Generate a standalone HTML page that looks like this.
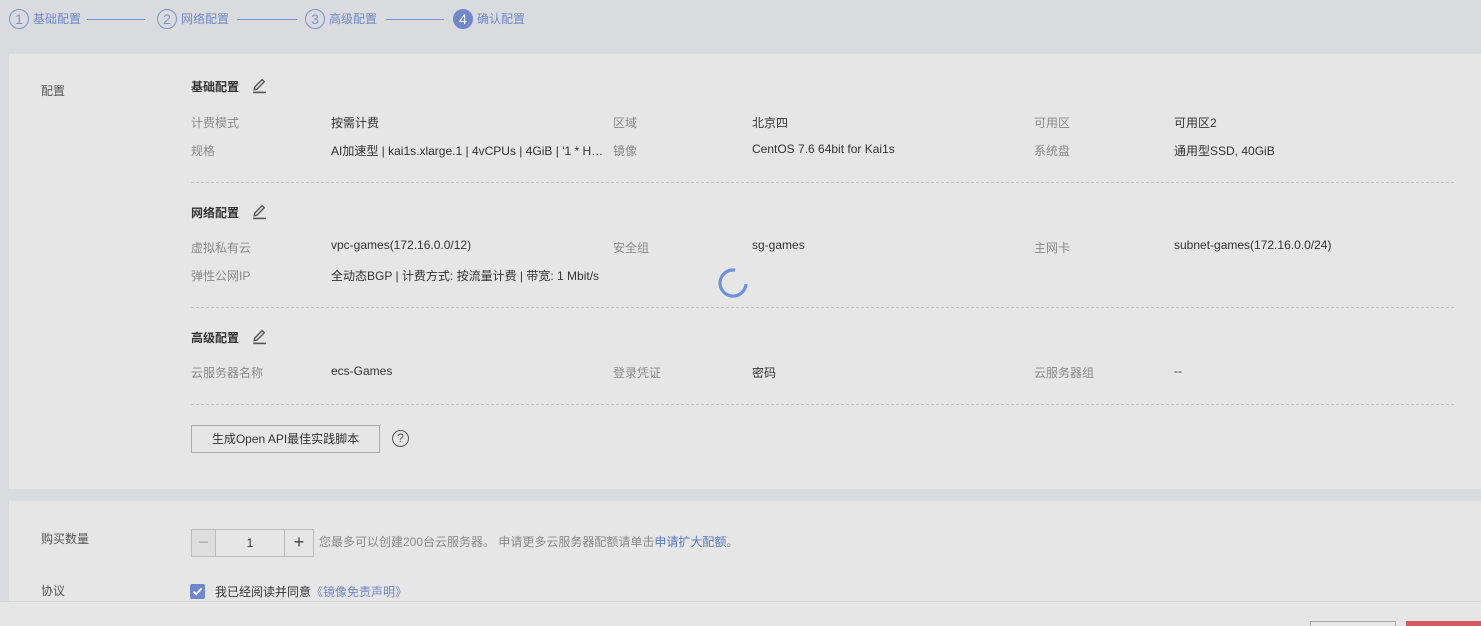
<!DOCTYPE html>
<html><head><meta charset="utf-8"><style>
*{margin:0;padding:0;box-sizing:border-box}
html,body{width:1481px;height:626px;overflow:hidden}
body{background:#dadbde;font-family:"Liberation Sans","Noto Sans CJK SC",sans-serif;font-size:12px;line-height:12px;color:#333;position:relative}
.a{position:absolute;white-space:nowrap}
.l{color:#8a8a8a}
.st{color:#6f88c8;font-size:12px}
.c{position:absolute;width:20px;height:20px;border:1px solid #7b93d3;border-radius:50%;color:#7b93d3;text-align:center;line-height:18px;font-size:14px}
.ln{position:absolute;height:1px;background:#7b93d3;top:19px}
.panel{position:absolute;left:9px;background:#e6e6e6}
.dash{position:absolute;left:191px;width:1263px;border-top:1px dashed #c4c4c4}
.h{font-weight:bold;color:#333;font-size:12px}
</style></head><body>
<div class="c" style="left:9px;top:9px">1</div><div class="a st" style="left:33px;top:13px">基础配置</div>
<div class="ln" style="left:87px;width:58px"></div>
<div class="c" style="left:157px;top:9px">2</div><div class="a st" style="left:181px;top:13px">网络配置</div>
<div class="ln" style="left:237px;width:60px"></div>
<div class="c" style="left:305px;top:9px">3</div><div class="a st" style="left:329px;top:13px">高级配置</div>
<div class="ln" style="left:386px;width:58px"></div>
<div class="c" style="left:453px;top:9px;background:#6f88cc;border-color:#6f88cc;color:#fff">4</div><div class="a st" style="left:477px;top:13px">确认配置</div>

<div class="panel" style="top:54px;width:1472px;height:435px"></div>
<div class="panel" style="top:501px;width:1472px;height:100px"></div>
<div class="a" style="left:0;top:601px;width:1481px;height:25px;background:#e6e6e6;border-top:1px solid #d6d6d6"></div>
<div class="a" style="left:1310px;top:621px;width:86px;height:10px;border:1px solid #aaa;background:#e8e8e8"></div>
<div class="a" style="left:1406px;top:621px;width:80px;height:10px;background:#d9575e"></div>

<div class="a l" style="left:41px;top:85px;color:#555">配置</div>

<div class="a h" style="left:191px;top:81px">基础配置</div>
<svg class="a" style="left:251px;top:77px" width="17" height="17" viewBox="0 0 16 16"><path d="M3 12 L3.5 9.5 L10.5 2.5 L12.5 4.5 L5.5 11.5 Z" fill="none" stroke="#555" stroke-width="1.3"/><path d="M2 14.5 H14" stroke="#555" stroke-width="1.5"/></svg>
<div class="a l" style="left:191px;top:117px">计费模式</div><div class="a" style="left:331px;top:117px">按需计费</div>
<div class="a l" style="left:613px;top:117px">区域</div><div class="a" style="left:752px;top:117px">北京四</div>
<div class="a l" style="left:1034px;top:117px">可用区</div><div class="a" style="left:1174px;top:117px">可用区2</div>
<div class="a l" style="left:191px;top:145px">规格</div><div class="a" style="left:331px;top:145px">AI加速型 | kai1s.xlarge.1 | 4vCPUs | 4GiB | '1 * H…</div>
<div class="a l" style="left:613px;top:145px">镜像</div><div class="a" style="left:752px;top:143px">CentOS 7.6 64bit for Kai1s</div>
<div class="a l" style="left:1034px;top:145px">系统盘</div><div class="a" style="left:1174px;top:145px">通用型SSD, 40GiB</div>
<div class="dash" style="top:182px"></div>

<div class="a h" style="left:191px;top:207px">网络配置</div>
<svg class="a" style="left:251px;top:203px" width="17" height="17" viewBox="0 0 16 16"><path d="M3 12 L3.5 9.5 L10.5 2.5 L12.5 4.5 L5.5 11.5 Z" fill="none" stroke="#555" stroke-width="1.3"/><path d="M2 14.5 H14" stroke="#555" stroke-width="1.5"/></svg>
<div class="a l" style="left:191px;top:242px">虚拟私有云</div><div class="a" style="left:331px;top:239px">vpc-games(172.16.0.0/12)</div>
<div class="a l" style="left:613px;top:242px">安全组</div><div class="a" style="left:752px;top:239px">sg-games</div>
<div class="a l" style="left:1034px;top:242px">主网卡</div><div class="a" style="left:1174px;top:239px">subnet-games(172.16.0.0/24)</div>
<div class="a l" style="left:191px;top:270px">弹性公网IP</div><div class="a" style="left:331px;top:270px">全动态BGP | 计费方式: 按流量计费 | 带宽: 1 Mbit/s</div>
<svg class="a" style="left:717px;top:267px" width="32" height="32" viewBox="0 0 32 32"><path d="M18 3.2 A13 13 0 1 0 29 17" fill="none" stroke="#6f92e0" stroke-width="3.2"/></svg>
<div class="dash" style="top:307px"></div>

<div class="a h" style="left:191px;top:332px">高级配置</div>
<svg class="a" style="left:251px;top:328px" width="17" height="17" viewBox="0 0 16 16"><path d="M3 12 L3.5 9.5 L10.5 2.5 L12.5 4.5 L5.5 11.5 Z" fill="none" stroke="#555" stroke-width="1.3"/><path d="M2 14.5 H14" stroke="#555" stroke-width="1.5"/></svg>
<div class="a l" style="left:191px;top:367px">云服务器名称</div><div class="a" style="left:331px;top:365px">ecs-Games</div>
<div class="a l" style="left:613px;top:367px">登录凭证</div><div class="a" style="left:752px;top:367px">密码</div>
<div class="a l" style="left:1034px;top:367px">云服务器组</div><div class="a" style="left:1174px;top:365px">--</div>
<div class="dash" style="top:404px"></div>

<div class="a" style="left:191px;top:425px;width:189px;height:28px;border:1px solid #aaa;text-align:center;line-height:26px">生成Open API最佳实践脚本</div>
<div class="a" style="left:392px;top:430px;width:17px;height:17px;border:1.3px solid #555;border-radius:50%;text-align:center;line-height:15px;font-size:12px;color:#555">?</div>

<div class="a" style="left:41px;top:533px;color:#555">购买数量</div>
<div class="a" style="left:191px;top:529px;width:123px;height:28px;border:1px solid #bbb;background:#e6e6e6"></div>
<div class="a" style="left:192px;top:530px;width:24px;height:26px;background:#dedede;border-right:1px solid #bbb;text-align:center;line-height:24px;color:#aaa;font-size:18px">−</div>
<div class="a" style="left:217px;top:537px;width:66px;text-align:center">1</div>
<div class="a" style="left:284px;top:530px;width:29px;height:26px;border-left:1px solid #bbb;text-align:center;line-height:24px;color:#444;font-size:18px">+</div>
<div class="a l" style="left:319px;top:536px">您最多可以创建200台云服务器。 申请更多云服务器配额请单击<span style="color:#5a78c4">申请扩大配额</span>。</div>

<div class="a" style="left:41px;top:585px;color:#555">协议</div>
<div class="a" style="left:190px;top:584px;width:15px;height:15px;background:#6f88cc;border-radius:2px"></div>
<svg class="a" style="left:190px;top:584px" width="15" height="15" viewBox="0 0 15 15"><path d="M3.5 7.5 L6.2 10.2 L11.5 4.5" fill="none" stroke="#fff" stroke-width="1.8"/></svg>
<div class="a" style="left:215px;top:586px">我已经阅读并同意<span style="color:#6f88c8">《镜像免责声明》</span></div>
</body></html>
